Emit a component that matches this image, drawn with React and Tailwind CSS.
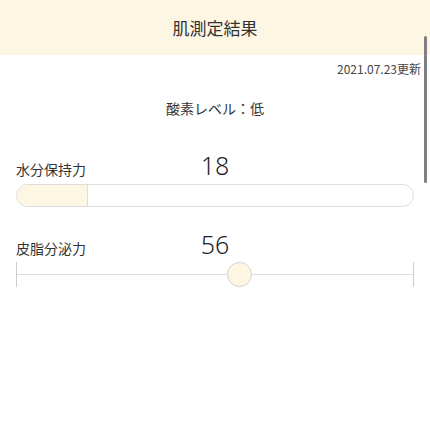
export default function App() {
  const water = 18;
  const sebum = 56;
  const numFont = { fontFamily: '"Noto Sans", sans-serif' };

  return (
    <div
      className="relative w-[430px] h-[430px] bg-white overflow-hidden text-[#333]"
      style={{ fontFamily: '"Noto Sans CJK JP", "Noto Sans", sans-serif' }}
    >
      {/* header */}
      <div className="h-[55px] bg-[#fdf6e3] flex items-center justify-center">
        <h1 className="text-[17px] leading-none text-[#333]">肌測定結果</h1>
      </div>

      {/* scrollbar */}
      <div className="absolute left-[424px] top-[36px] w-[3px] h-[147px] rounded-full bg-[#808080]" />

      <div className="flex justify-end pr-[9px] pt-[8px]">
        <span className="text-[12px] leading-none text-[#444]">2021.07.23更新</span>
      </div>

      <p className="text-center text-[14px] leading-none mt-[26px]">酸素レベル：低</p>

      <div className="px-4 flex flex-col">
        {/* water */}
        <div className="mt-[38px] grid grid-cols-3 items-baseline">
          <span className="text-[14px] leading-none">水分保持力</span>
          <span className="text-center text-[25px] leading-none font-light text-[#1f1f1f]" style={numFont}>
            {water}
          </span>
        </div>
        <div className="mt-[6px] w-[398px] h-[23px] rounded-full border border-[#ddd] overflow-hidden">
          <div
            className="h-full bg-[#fdf6e3] border-r border-[#ddd]"
            style={{ width: `${water}%` }}
          />
        </div>

        {/* sebum */}
        <div className="mt-[25px] grid grid-cols-3 items-baseline">
          <span className="text-[14px] leading-none">皮脂分泌力</span>
          <span className="text-center text-[25px] leading-none font-light text-[#1f1f1f]" style={numFont}>
            {sebum}
          </span>
        </div>
        <div className="relative mt-[5px] w-[398px] h-[25px] flex items-center">
          <div className="w-px h-full bg-[#ccc]" />
          <div className="flex-1 h-px bg-[#ddd]" />
          <div className="w-px h-full bg-[#ccc]" />
          <div
            className="absolute top-0 w-[25px] h-[25px] -ml-[12px] rounded-full bg-[#fdf6e3] border border-[#d6d3c8]"
            style={{ left: `${sebum}%` }}
          />
        </div>
      </div>
    </div>
  );
}
